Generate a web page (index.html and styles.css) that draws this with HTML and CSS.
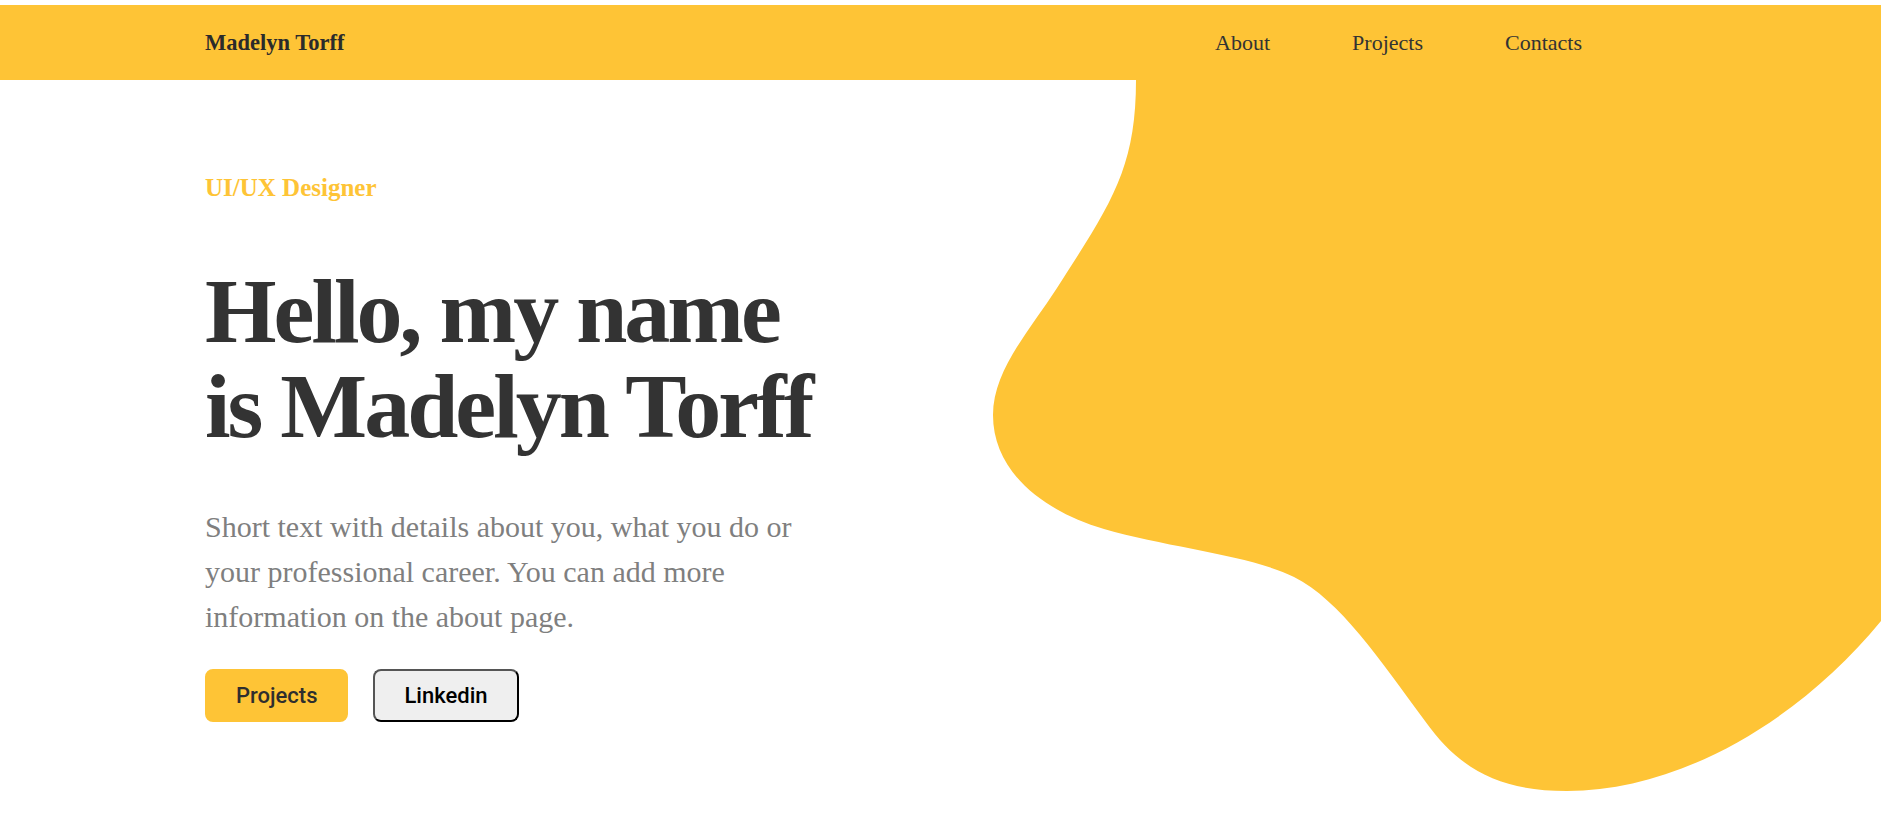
FILE: index.html
```html
<!DOCTYPE html>
<html lang="en">
<head>
<meta charset="utf-8">
<title>Madelyn Torff</title>
<link rel="stylesheet" href="styles.css">
</head>
<body>
<div class="page">
  <svg class="blob" width="1881" height="840" viewBox="0 0 1881 840" aria-hidden="true">
    <path fill="#FEC436" d="M1136 70 L1136 80 C1136 170 1110 205 1057 288 C1030 330 993 370 993 415 C993 470 1040 510 1104 529 C1170 548 1250 555 1294 577 C1340 600 1380 660 1425 721 C1460 770 1500 791 1567 791 C1680 791 1800 720 1881 621 L1900 600 L1900 70 Z"/>
  </svg>
  <header class="topbar">
    <a class="logo" href="#">Madelyn Torff</a>
    <nav class="nav">
      <a href="#">About</a>
      <a href="#">Projects</a>
      <a href="#">Contacts</a>
    </nav>
  </header>
  <main class="hero">
    <p class="role">UI/UX Designer</p>
    <h1 class="title">Hello, my name<br>is Madelyn Torff</h1>
    <p class="intro">Short text with details about you, what you do or your professional career. You can add more information on the about page.</p>
    <div class="actions">
      <a class="btn btn-primary" href="#">Projects</a>
      <a class="btn btn-outline" href="#">Linkedin</a>
    </div>
  </main>
</div>
</body>
</html>
```

FILE: styles.css
```css
html, body {
  margin: 0;
  padding: 0;
  overflow: hidden;
  background: #ffffff;
}

.page {
  position: relative;
  height: 840px;
  padding-top: 5px;
  box-sizing: border-box;
  overflow: hidden;
  font-family: "Liberation Serif", "Times New Roman", serif;
}

.blob {
  position: absolute;
  top: 0;
  left: 0;
  z-index: 0;
}

.topbar {
  position: relative;
  z-index: 1;
  height: 75px;
  background: #FEC436;
  display: flex;
  align-items: center;
  padding: 0 299px 0 205px;
}

.logo {
  font-size: 22.5px;
  font-weight: bold;
  color: #2b2b2b;
  text-decoration: none;
}

.nav {
  margin-left: auto;
  display: flex;
  gap: 82px;
}

.nav a {
  font-size: 22px;
  color: #333333;
  text-decoration: none;
}

.hero {
  position: relative;
  z-index: 1;
  padding-left: 205px;
}

.role {
  margin: 93px 0 0;
  font-size: 25px;
  line-height: 30px;
  font-weight: bold;
  color: #FEC436;
}

.title {
  margin: 61px 0 0;
  font-size: 92px;
  line-height: 95px;
  font-weight: bold;
  letter-spacing: -3px;
  color: #333333;
}

.intro {
  margin: 50px 0 0;
  max-width: 610px;
  font-size: 30px;
  line-height: 45px;
  color: #7f7f7f;
}

.actions {
  margin-top: 30px;
  display: flex;
  gap: 25px;
}

.btn {
  display: inline-block;
  font-family: Roboto, "Liberation Sans", sans-serif;
  font-size: 22px;
  font-weight: 500;
  line-height: 27px;
  padding: 11px 29px;
  border: 2px solid transparent;
  border-radius: 8px;
  text-decoration: none;
}

.btn-primary {
  background: #FEC436;
  border-color: #FEC436;
  color: #2e2e2e;
}

.btn-outline {
  background: #efefef;
  border-color: #555555 #000000 #000000 #555555;
  color: #000000;
}
```
